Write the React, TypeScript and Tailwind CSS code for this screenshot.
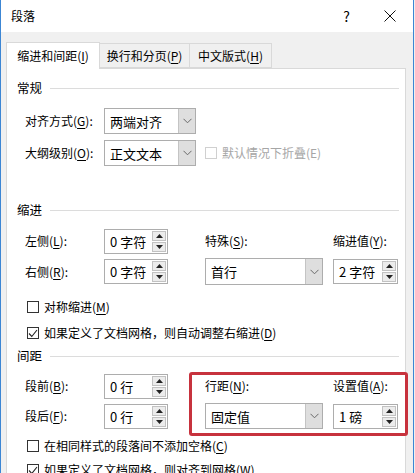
import React from 'react'

const FONT = { fontFamily: '"Noto Sans CJK SC", "Noto Sans", "Liberation Sans", sans-serif' }

// text with an access key, e.g. 对齐方式(G):
function Key({ text, k, tail = '' }: { text: string; k: string; tail?: string }) {
  return (
    <span className="whitespace-nowrap">
      {text}(<span className="underline underline-offset-2 decoration-1">{k}</span>){tail}
    </span>
  )
}

function Chevron() {
  return (
    <svg width="9" height="6" viewBox="0 0 9 6" fill="none">
      <polyline points="0.5,0.8 4.5,4.8 8.5,0.8" stroke="#6a6a6a" strokeWidth="1" />
    </svg>
  )
}

function Combo({ value, className }: { value: string; className: string }) {
  return (
    <div className={`flex h-[26px] border border-[#adadad] bg-white ${className}`}>
      <div className="flex flex-1 items-center pl-[5px] text-[13px] leading-none text-black">{value}</div>
      <div className="flex w-[17px] items-center justify-center border-l border-[#c4c4c4] bg-[#dedede]">
        <Chevron />
      </div>
    </div>
  )
}

function Arrow({ up }: { up: boolean }) {
  return (
    <div className="flex h-[10px] w-[14px] items-center justify-center border border-[#c2c2c2] bg-[#ececec]">
      <svg width="7" height="4" viewBox="0 0 7 4">
        {up ? <polygon points="0,4 7,4 3.5,0" fill="#222" /> : <polygon points="0,0 7,0 3.5,4" fill="#222" />}
      </svg>
    </div>
  )
}

function Spin({ value, className }: { value: string; className: string }) {
  return (
    <div className={`flex h-[25px] items-center border border-[#adadad] bg-white ${className}`}>
      <div className="flex-1 pl-[5px] text-[13px] leading-none text-black whitespace-nowrap">{value}</div>
      <div className="mr-[1px] flex flex-col gap-px">
        <Arrow up />
        <Arrow up={false} />
      </div>
    </div>
  )
}

function Check({ checked, disabled }: { checked?: boolean; disabled?: boolean }) {
  return (
    <div
      className={`flex h-[12px] w-[12px] shrink-0 items-center justify-center border bg-white ${
        disabled ? 'border-[#d0d0d0]' : 'border-[#333333]'
      }`}
    >
      {checked && (
        <svg width="10" height="9" viewBox="0 0 10 9" fill="none">
          <polyline points="1,4.5 3.8,7.5 9,1" stroke="#222" strokeWidth="1.1" />
        </svg>
      )}
    </div>
  )
}

function Section({ title, className }: { title: string; className: string }) {
  return (
    <div className={`flex h-[16px] items-center gap-[8px] pr-[6px] ${className}`}>
      <span className="text-[12.5px] leading-none text-black">{title}</span>
      <div className="h-px flex-1 bg-[#dcdcdc]" />
    </div>
  )
}

function CheckRow({ checked, children, className }: { checked?: boolean; children: React.ReactNode; className: string }) {
  return (
    <div className={`flex h-[16px] items-center gap-[5px] pl-[10px] leading-none text-black ${className}`}>
      <Check checked={checked} />
      <span className="whitespace-nowrap">{children}</span>
    </div>
  )
}

export default function App() {
  return (
    <div className="relative h-[473px] w-[415px] overflow-hidden bg-[#f0f0f0] text-[12px]" style={FONT}>
      <div className="flex h-full w-[414px] flex-col border-x border-[#3c86d4]">
        {/* title bar */}
        <div className="flex h-[32px] shrink-0 items-center bg-white pl-[10px] text-black">
          <span className="leading-none">段落</span>
          <span className="ml-auto mr-[34px] text-[14px] leading-none">?</span>
          <svg className="mr-[17px]" width="12" height="12" viewBox="0 0 12 12">
            <path d="M0.5 0.5 L11.5 11.5 M11.5 0.5 L0.5 11.5" stroke="#111" strokeWidth="1" />
          </svg>
        </div>

        {/* tabs */}
        <div className="mt-[10px] flex shrink-0 items-end pl-[5px] leading-none text-black">
          <div className="relative z-10 -mb-px flex h-[27px] w-[94px] items-center justify-center border border-b-0 border-[#d9d9d9] bg-white">
            <Key text="缩进和间距" k="I" />
          </div>
          <div className="flex h-[25px] w-[90px] items-center justify-center border border-l-0 border-[#d9d9d9] bg-[#f0f0f0]">
            <Key text="换行和分页" k="P" />
          </div>
          <div className="flex h-[25px] w-[82px] items-center justify-center border border-l-0 border-[#d9d9d9] bg-[#f0f0f0]">
            <Key text="中文版式" k="H" />
          </div>
        </div>

        {/* panel */}
        <div className="ml-[5px] mr-[7px] h-[420px] shrink-0 border border-[#d9d9d9] bg-white pl-[10px] leading-none text-black">
          <Section title="常规" className="mt-[11px]" />

          <div className="ml-[8px] mt-[12px] flex h-[26px] items-center">
            <div className="w-[79px]"><Key text="对齐方式" k="G" tail=":" /></div>
            <Combo value="两端对齐" className="w-[92px]" />
          </div>
          <div className="ml-[8px] mt-[6px] flex h-[26px] items-center">
            <div className="w-[79px]"><Key text="大纲级别" k="O" tail=":" /></div>
            <Combo value="正文文本" className="w-[92px]" />
            <div className="ml-[9px] flex items-center gap-[5px] text-[#a6a6a6]">
              <Check disabled />
              <span>默认情况下折叠(E)</span>
            </div>
          </div>

          <Section title="缩进" className="mt-[36px]" />

          <div className="ml-[8px] mt-[10px] flex h-[26px] items-center">
            <div className="w-[79px]"><Key text="左侧" k="L" tail=":" /></div>
            <Spin value="0 字符" className="w-[64px]" />
            <div className="ml-[37px] w-[128px]"><Key text="特殊" k="S" tail=":" /></div>
            <div><Key text="缩进值" k="Y" tail=":" /></div>
          </div>
          <div className="ml-[8px] mt-[4px] flex h-[27px] items-center">
            <div className="w-[79px]"><Key text="右侧" k="R" tail=":" /></div>
            <Spin value="0 字符" className="w-[64px]" />
            <Combo value="首行" className="ml-[37px] h-[27px] w-[118px]" />
            <Spin value="2 字符" className="ml-[10px] w-[65px]" />
          </div>

          <CheckRow className="mt-[14px]">
            对称缩进(<span className="underline underline-offset-2">M</span>)
          </CheckRow>
          <CheckRow checked className="mt-[10px]">
            如果定义了文档网格，则自动调整右缩进(<span className="underline underline-offset-2">D</span>)
          </CheckRow>

          <Section title="间距" className="mt-[7px]" />

          <div className="ml-[8px] mt-[9px] flex h-[26px] items-center">
            <div className="w-[79px]"><Key text="段前" k="B" tail=":" /></div>
            <Spin value="0 行" className="w-[64px]" />
            <div className="ml-[37px] w-[128px]"><Key text="行距" k="N" tail=":" /></div>
            <div><Key text="设置值" k="A" tail=":" /></div>
          </div>
          <div className="ml-[8px] mt-[4px] flex h-[26px] items-center">
            <div className="w-[79px]"><Key text="段后" k="F" tail=":" /></div>
            <Spin value="0 行" className="w-[64px]" />
            <Combo value="固定值" className="ml-[37px] w-[118px]" />
            <Spin value="1 磅" className="ml-[10px] w-[65px]" />
          </div>

          <CheckRow className="mt-[9px]">
            在相同样式的段落间不添加空格(<span className="underline underline-offset-2">C</span>)
          </CheckRow>
          <CheckRow checked className="mt-[8px]">
            如果定义了文档网格，则对齐到网格(<span className="underline underline-offset-2">W</span>)
          </CheckRow>
        </div>
      </div>

      {/* red annotation box */}
      <div className="absolute left-[189px] top-[372px] h-[64px] w-[219px] rounded-[3px] border-[3px] border-[#c7323d]" />
    </div>
  )
}
